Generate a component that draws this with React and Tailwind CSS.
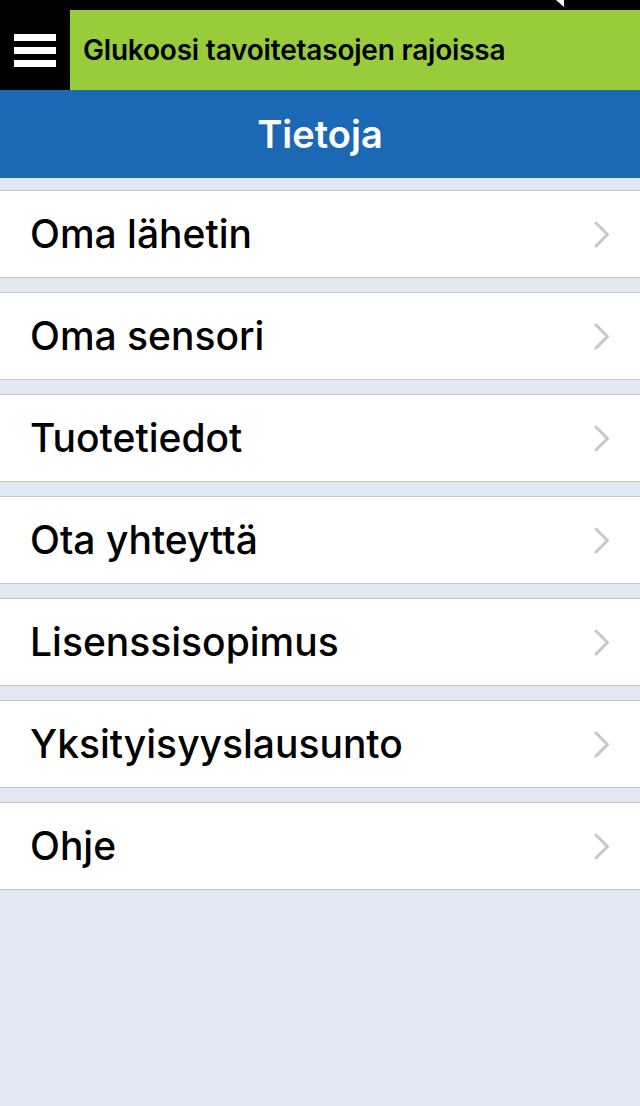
import React from "react";

const items = [
  "Oma lähetin",
  "Oma sensori",
  "Tuotetiedot",
  "Ota yhteyttä",
  "Lisenssisopimus",
  "Yksityisyyslausunto",
  "Ohje",
];

const Chevron = () => (
  <svg width="16" height="27" viewBox="0 0 16 27" fill="none">
    <path d="M2 2 L13.5 13.5 L2 25" stroke="#c7c7cc" strokeWidth="3" strokeLinecap="round" strokeLinejoin="round" />
  </svg>
);

export default function App() {
  return (
    <div className="w-[640px] h-[1106px] bg-[#e1e8f1] flex flex-col" style={{ fontFamily: "Inter, 'Liberation Sans', sans-serif" }}>
      {/* status strip */}
      <div className="h-[10px] bg-black relative shrink-0">
        <div className="absolute left-[556px] top-0 w-0 h-0 border-l-[8px] border-l-transparent border-t-[7px] border-t-white" />
      </div>

      {/* alert bar */}
      <div className="h-[80px] flex shrink-0">
        <div className="w-[70px] bg-black flex flex-col justify-center items-start pl-[14px] gap-[6px]">
          <div className="w-[42px] h-[7px] bg-white" />
          <div className="w-[42px] h-[7px] bg-white" />
          <div className="w-[42px] h-[7px] bg-white" />
        </div>
        <div className="flex-1 bg-[#99cc3b] flex items-center pl-[13px]">
          <span className="text-[28px] font-semibold text-black tracking-[-0.2px]">
            Glukoosi tavoitetasojen rajoissa
          </span>
        </div>
      </div>

      {/* title */}
      <div className="h-[88px] bg-[#1b69b5] flex items-center justify-center shrink-0">
        <span className="text-white text-[38px] font-semibold">Tietoja</span>
      </div>

      {/* list */}
      <div className="flex flex-col gap-[14px] pt-[12px]">
        {items.map((label) => (
          <div
            key={label}
            className="h-[88px] bg-white border-y border-[#c8c7cc] flex items-center justify-between pl-[30px] pr-[30px]"
          >
            <span className="text-[39px] font-medium text-black">{label}</span>
            <Chevron />
          </div>
        ))}
      </div>
    </div>
  );
}
